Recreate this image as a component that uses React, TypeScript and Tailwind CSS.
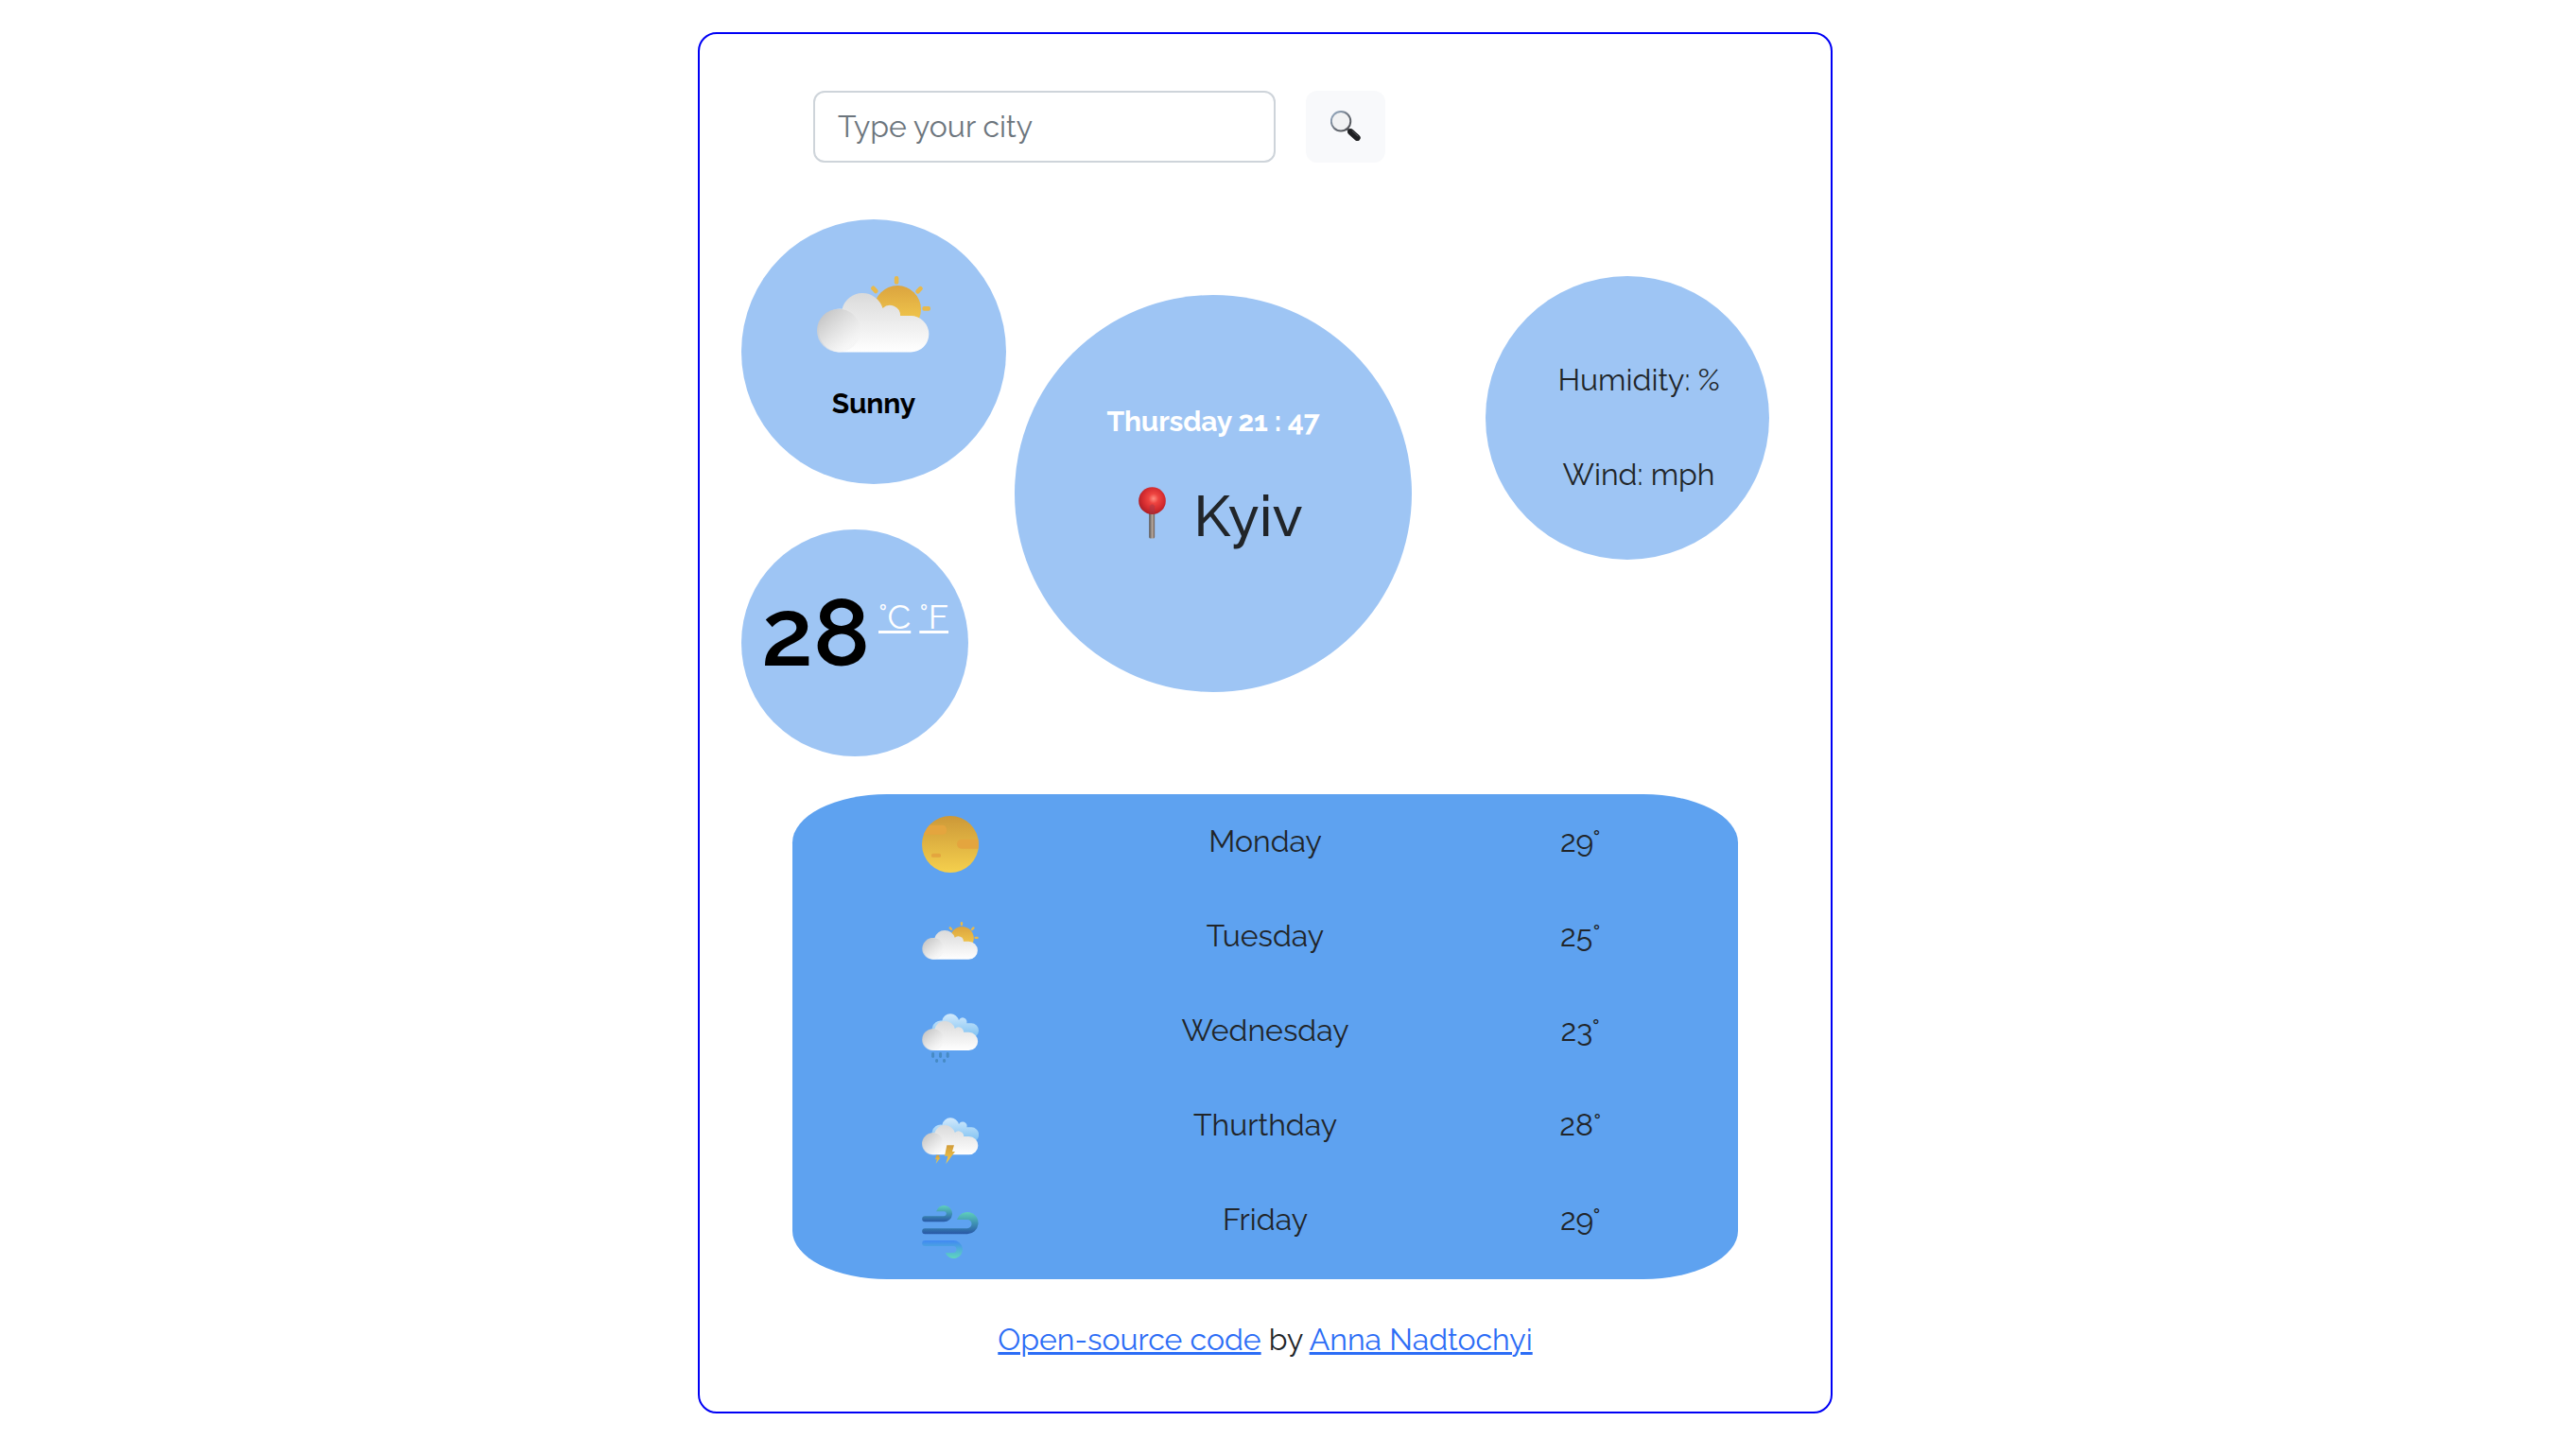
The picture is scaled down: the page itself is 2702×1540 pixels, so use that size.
function Defs() {
  return (
    <svg className="absolute size-0" aria-hidden="true">
      <defs>
        <linearGradient id="sun" x1="0" y1="0" x2="0" y2="1">
          <stop offset="0" stopColor="#cc9838" />
          <stop offset="1" stopColor="#f5d04d" />
        </linearGradient>
        <linearGradient id="halfSun" gradientUnits="userSpaceOnUse" x1="0" y1="245" x2="0" y2="350">
          <stop offset="0" stopColor="#dba43f" />
          <stop offset="1" stopColor="#efc44b" />
        </linearGradient>
        <linearGradient id="cloud" gradientUnits="userSpaceOnUse" x1="0" y1="269" x2="0" y2="457">
          <stop offset="0" stopColor="#dadada" />
          <stop offset="1" stopColor="#ffffff" />
        </linearGradient>
        <linearGradient id="puff" x1="0.15" y1="0.1" x2="0.8" y2="0.75">
          <stop offset="0" stopColor="#c6c6c6" />
          <stop offset="1" stopColor="#f3f3f3" stopOpacity="0.6" />
        </linearGradient>
        <linearGradient id="backCloud" gradientUnits="userSpaceOnUse" x1="0" y1="65" x2="0" y2="143">
          <stop offset="0" stopColor="#d3eafc" />
          <stop offset="1" stopColor="#7cc0f2" />
        </linearGradient>
        <linearGradient id="bolt" x1="0" y1="0" x2="0" y2="1">
          <stop offset="0" stopColor="#d29c3a" />
          <stop offset="1" stopColor="#f6cf4e" />
        </linearGradient>
        <linearGradient id="gust" x1="0" y1="0" x2="0" y2="1">
          <stop offset="0" stopColor="#5fd0bb" />
          <stop offset="0.5" stopColor="#3f93b4" />
          <stop offset="1" stopColor="#2858a6" />
        </linearGradient>
        <linearGradient id="breeze" x1="0" y1="0" x2="0" y2="1">
          <stop offset="0" stopColor="#4189f3" />
          <stop offset="1" stopColor="#5fd6bd" />
        </linearGradient>
        <radialGradient id="pinHead" cx="0.55" cy="0.42" r="0.6">
          <stop offset="0" stopColor="#ff8d80" />
          <stop offset="0.3" stopColor="#ee4440" />
          <stop offset="0.7" stopColor="#d22a2e" />
          <stop offset="1" stopColor="#a81f26" />
        </radialGradient>
        <linearGradient id="pinStick" x1="0" y1="0" x2="1" y2="0">
          <stop offset="0" stopColor="#55504f" />
          <stop offset="0.3" stopColor="#857d78" />
          <stop offset="0.6" stopColor="#b9a99d" />
          <stop offset="1" stopColor="#655650" />
        </linearGradient>
        <linearGradient id="rim" x1="0" y1="0" x2="1" y2="1">
          <stop offset="0" stopColor="#9db4cc" />
          <stop offset="0.5" stopColor="#6f7680" />
          <stop offset="1" stopColor="#4a4a4c" />
        </linearGradient>
      </defs>
    </svg>
  );
}

function CloudShape() {
  return (
    <>
      <path
        d="M351 457A69 69 0 1 1 362 319A67 67 0 0 1 491 317A33 33 0 0 1 547 341H580A58 58 0 0 1 580 457Z"
        fill="url(#cloud)"
      />
      <circle cx="351" cy="388" r="69" fill="url(#puff)" />
    </>
  );
}

function PartlyCloudy({ className }: { className: string }) {
  return (
    <svg viewBox="282 215 361 243" className={className}>
      <circle cx="538" cy="320" r="75" fill="url(#halfSun)" />
      <g fill="#e8b94b">
        <rect x="528" y="215" width="14" height="26" rx="7" />
        <rect x="458" y="245" width="14" height="26" rx="6" transform="rotate(-43 465 258)" />
        <rect x="600" y="246" width="14" height="26" rx="6" transform="rotate(43 607 259)" />
        <rect x="617" y="311" width="26" height="14" rx="6" />
      </g>
      <CloudShape />
    </svg>
  );
}

function DoubleCloud() {
  return (
    <>
      <path
        d="M130 143A27 27 0 1 1 139 88A27 27 0 0 1 192 87A13 13 0 0 1 217 96H232A23 23 0 0 1 232 143Z"
        fill="url(#backCloud)"
      />
      <g transform="translate(-66 -45.5) scale(0.5)">
        <CloudShape />
      </g>
    </>
  );
}

function Rain() {
  return (
    <svg viewBox="75 65 180 157" className="h-[52px] w-[60px]">
      <DoubleCloud />
      <g fill="#478ac4">
        <rect x="105" y="189" width="9" height="18" rx="4.5" />
        <rect x="129" y="189" width="9" height="18" rx="4.5" />
        <rect x="152" y="189" width="9" height="18" rx="4.5" />
        <rect x="117" y="210" width="9" height="12" rx="4.5" />
        <rect x="141" y="210" width="9" height="12" rx="4.5" />
      </g>
    </svg>
  );
}

function Storm() {
  return (
    <svg viewBox="75 65 180 147" className="h-[49px] w-[60px]">
      <DoubleCloud />
      <path d="M154 153H177L171 173H180L151 212L157 187H147Z" fill="url(#bolt)" />
      <path d="M121 184H131L129 192H134L119 211L123 198H117Z" fill="url(#bolt)" />
    </svg>
  );
}

function Sun() {
  return (
    <svg viewBox="75 39.5 180 180" className="size-[60px]">
      <clipPath id="sunDisc">
        <circle cx="165" cy="129.5" r="90" />
      </clipPath>
      <circle cx="165" cy="129.5" r="90" fill="url(#sun)" />
      <g fill="#e4a53e" clipPath="url(#sunDisc)">
        <rect x="60" y="69" width="93" height="30" rx="13" />
        <rect x="186" y="113.5" width="90" height="30" rx="15" />
        <rect x="105" y="159" width="30" height="12" rx="5" />
      </g>
    </svg>
  );
}

function Wind() {
  return (
    <svg viewBox="75 674 180 169" className="h-[56px] w-[60px]">
      <path d="M84 708H145A7.5 7.5 0 0 0 145 693H120A26 26 0 1 1 145 726H84A9 9 0 0 1 84 708Z" fill="url(#gust)" />
      <path d="M84 747H219A14 14 0 0 0 219 719H186A35 35 0 1 1 219 765H84A9 9 0 0 1 84 747Z" fill="url(#gust)" />
      <path d="M84 786H174A28.5 28.5 0 1 1 149 825H174A10.5 10.5 0 0 0 174 804H84A9 9 0 0 1 84 786Z" fill="url(#breeze)" />
    </svg>
  );
}

function Pin() {
  return (
    <svg viewBox="41 45 88 166" className="mt-[5px] mr-[29px] h-[55px] w-[29px]">
      <rect x="75" y="120" width="18" height="90" rx="5" fill="url(#pinStick)" />
      <circle cx="85" cy="89" r="43.5" fill="url(#pinHead)" />
      <path d="M77 131V106q8-12 16 0V131Z" fill="#9c3a4c" opacity="0.45" />
    </svg>
  );
}

function Magnifier() {
  return (
    <svg viewBox="82 79 97 97" className="size-8">
      <path d="M136 137L146 147" stroke="#55565a" strokeWidth="9" />
      <path d="M147 147L168 166" stroke="#1e1f21" strokeWidth="20" strokeLinecap="round" />
      <path d="M152 144L170 161" stroke="#55585c" strokeWidth="3" strokeLinecap="round" />
      <circle cx="115.5" cy="113" r="31" fill="#f1f2f3" stroke="url(#rim)" strokeWidth="6" />
    </svg>
  );
}

const forecast = [
  { day: 'Monday', temp: '29°', icon: <Sun />, pad: 'pt-[23px]' },
  { day: 'Tuesday', temp: '25°', icon: <PartlyCloudy className="h-10 w-[60px]" />, pad: 'pt-[35px]' },
  { day: 'Wednesday', temp: '23°', icon: <Rain />, pad: 'pt-[32px]' },
  { day: 'Thurthday', temp: '28°', icon: <Storm />, pad: 'pt-[42px]' },
  { day: 'Friday', temp: '29°', icon: <Wind />, pad: 'pt-[35px]' },
];

export default function App() {
  return (
    <div className="flex min-h-[1540px] justify-center bg-white pt-[34px] pr-[26px] font-['Raleway','Open_Sans',sans-serif] text-[32px] leading-[48px] text-[#212529]">
      <Defs />
      <main className="h-[1461px] w-[1200px] rounded-[20px] border-2 border-[#0000f5]">
        <form className="mt-[60px] ml-[120px] flex gap-8">
          <input
            type="text"
            placeholder="Type your city"
            className="h-[76px] w-[489px] rounded-xl border-2 border-[#ced4da] bg-white px-6 pb-0.5 placeholder:text-[#6c757d]"
          />
          <button
            type="button"
            aria-label="Search"
            className="flex h-[76px] w-[84px] items-center justify-center rounded-xl bg-[#f8f9fb] pb-0.5"
          >
            <Magnifier />
          </button>
        </form>

        <section className="mt-[60px] flex pl-[44px]">
          <div className="flex flex-col gap-12">
            <div className="flex size-[280px] flex-col items-center rounded-full bg-[#9ec5f4] pt-[60px] text-black">
              <PartlyCloudy className="h-[81px] w-[120px]" />
              <p className="mt-[30px] text-[30px] font-bold tracking-[-0.2px]">Sunny</p>
            </div>
            <div className="flex size-[240px] rounded-full bg-[#9ec5f4] pl-[21px]">
              <span className="mt-[49px] text-[100px] leading-[120px] font-semibold text-black">28</span>
              <span className="mt-[65px] ml-[9px] flex gap-[9px] text-[36px] leading-[54px] text-white">
                <a className="underline decoration-[3px] underline-offset-2">°C</a>
                <a className="underline decoration-[3px] underline-offset-2">°F</a>
              </span>
            </div>
          </div>

          <div className="mt-20 ml-[9px] flex size-[420px] flex-col items-center rounded-full bg-[#9ec5f4] pt-[110px]">
            <p className="text-[30px] font-bold tracking-[-0.2px] text-white">Thursday 21 : 47</p>
            <h2 className="mt-10 flex pl-4 text-[60px] leading-[72px] font-medium">
              <Pin />
              Kyiv
            </h2>
          </div>

          <div className="mt-[60px] ml-[78px] flex size-[300px] flex-col items-center gap-[52px] rounded-full bg-[#9ec5f4] pt-[86px] pl-6">
            <p>Humidity: %</p>
            <p>Wind: mph</p>
          </div>
        </section>

        <section className="mt-10 ml-[98px] h-[513px] w-[1000px] rounded-[10%] bg-[#5ea2f0]">
          {forecast.map(({ day, temp, icon, pad }) => (
            <div key={day} className="grid h-[100px] grid-cols-3 text-center">
              <div className={`flex items-start justify-center ${pad}`}>{icon}</div>
              <p className="pt-[26px]">{day}</p>
              <p className="pt-[26px]">{temp}</p>
            </div>
          ))}
        </section>

        <footer className="mt-10 text-center">
          <a className="text-[#2c6df6] underline decoration-[3px] underline-offset-2">Open-source code</a> by{' '}
          <a className="text-[#2c6df6] underline decoration-[3px] underline-offset-2">Anna Nadtochyi</a>
        </footer>
      </main>
    </div>
  );
}
